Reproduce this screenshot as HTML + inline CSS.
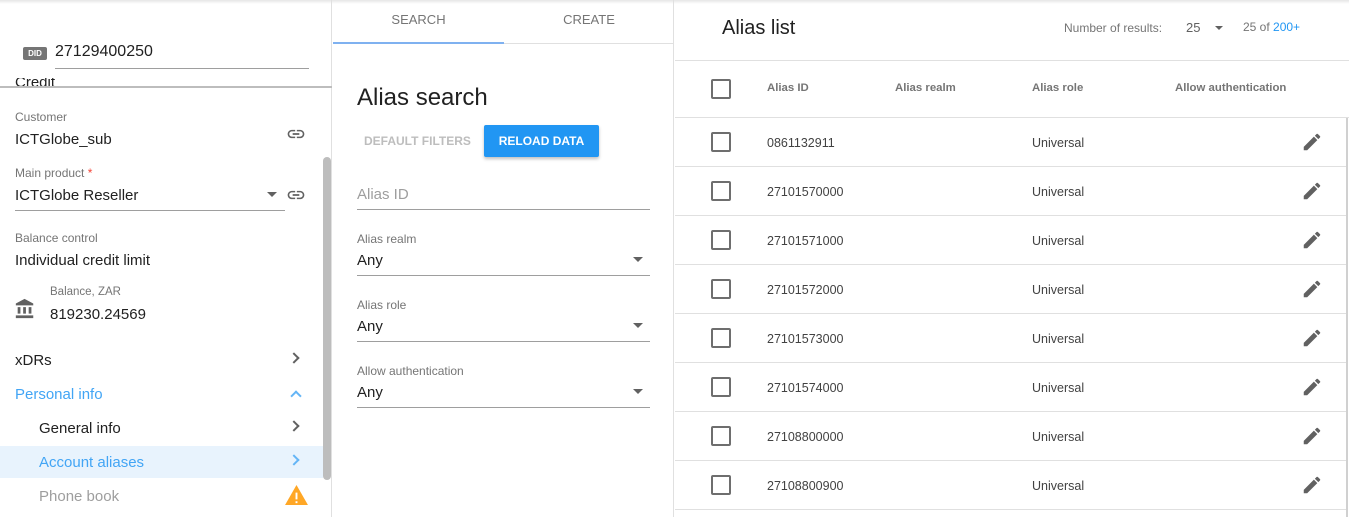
<!DOCTYPE html>
<html><head><style>
*{box-sizing:border-box;margin:0;padding:0}
body{width:1349px;height:517px;overflow:hidden;background:#fff;font-family:"Liberation Sans",Arial,sans-serif;position:relative;color:#212121}
.a{position:absolute;white-space:nowrap}
.lbl{font-size:12px;color:#757575}
.val{font-size:15px;color:#212121}
.hr{position:absolute;height:1px;background:#e0e0e0}
.cb{position:absolute;width:20px;height:20px;border:2px solid #6e6e6e;border-radius:2px;left:711px}
.cell{position:absolute;font-size:12.5px;color:#424242}
.th{position:absolute;font-size:11.4px;color:#757575;font-weight:bold;top:82px}
</style></head><body>
<div class="a" style="left:0;top:0;width:1349px;height:4px;background:linear-gradient(#e6e6e6,#fff)"></div>

<div class="a" style="left:0;top:0;width:332px;height:517px;border-right:1px solid #e0e0e0"></div>
<div class="a" style="left:15px;top:78px;font-size:15px;color:#212121;height:9px;overflow:hidden;line-height:10px">Credit</div>
<div class="a" style="left:0;top:86px;width:332px;height:2px;background:#bdbdbd"></div>
<div class="a" style="left:23px;top:47px;width:24px;height:13px;background:#757575;border-radius:2px;color:#fff;font-size:8px;font-weight:bold;text-align:center;line-height:13px">DID</div>
<div class="a" style="left:55px;top:43px;font-size:16px;color:#212121">27129400250</div>
<div class="a" style="left:55px;top:68px;width:254px;height:1px;background:#9e9e9e"></div>

<div class="a lbl" style="left:15px;top:110px">Customer</div>
<div class="a val" style="left:15px;top:131px">ICTGlobe_sub</div>
<svg class="a" style="left:286px;top:127px" width="20" height="14" viewBox="0 4 24 16"><path fill="#616161" d="M3.9 12c0-1.710 1.39-3.1 3.1-3.1h4V7H7c-2.76 0-5 2.24-5 5s2.24 5 5 5h4v-1.9H7c-1.71 0-3.1-1.39-3.1-3.1zM8 13h8v-2H8v2zm9-6h-4v1.9h4c1.71 0 3.1 1.39 3.1 3.1s-1.39 3.1-3.1 3.1h-4V17h4c2.76 0 5-2.240 5-5s-2.24-5-5-5z"/></svg>

<div class="a lbl" style="left:15px;top:166px">Main product <span style="color:#f44336">*</span></div>
<div class="a val" style="left:15px;top:187px">ICTGlobe Reseller</div>
<div class="a" style="left:267px;top:192px;border:5px solid transparent;border-top-color:#616161;border-bottom:0"></div>
<div class="a" style="left:15px;top:210px;width:270px;height:1px;background:#9e9e9e"></div>
<svg class="a" style="left:286px;top:188px" width="20" height="14" viewBox="0 4 24 16"><path fill="#616161" d="M3.9 12c0-1.71 1.39-3.1 3.1-3.1h4V7H7c-2.76 0-5 2.24-5 5s2.24 5 5 5h4v-1.9H7c-1.71 0-3.1-1.39-3.1-3.1zM8 13h8v-2H8v2zm9-6h-4v1.9h4c1.71 0 3.1 1.39 3.1 3.1s-1.39 3.1-3.1 3.1h-4V17h4c2.76 0 5-2.24 5-5s-2.24-5-5-5z"/></svg>

<div class="a lbl" style="left:15px;top:231px">Balance control</div>
<div class="a val" style="left:15px;top:252px">Individual credit limit</div>
<svg class="a" style="left:14px;top:298px" width="22" height="22" viewBox="0 0 24 24"><path fill="#616161" d="M4 10v7h3v-7H4zm6 0v7h3v-7h-3zM2 22h19v-3H2v3zm14-12v7h3v-7h-3zm-4.5-9L2 6v2h19V6l-9.5-5z"/></svg>
<div class="a" style="left:50px;top:286px;font-size:11.5px;color:#757575">Balance, ZAR</div>
<div class="a val" style="left:50px;top:306px">819230.24569</div>

<div class="a val" style="left:15px;top:352px">xDRs</div>
<div class="a" style="left:290px;top:354px;width:8px;height:8px;border-right:2px solid #616161;border-top:2px solid #616161;transform:rotate(45deg)"></div>
<div class="a val" style="left:15px;top:386px;color:#42a5f5">Personal info</div>
<div class="a" style="left:292px;top:392px;width:8px;height:8px;border-left:2px solid #64b5f6;border-top:2px solid #64b5f6;transform:rotate(45deg)"></div>
<div class="a val" style="left:39px;top:420px">General info</div>
<div class="a" style="left:290px;top:422px;width:8px;height:8px;border-right:2px solid #616161;border-top:2px solid #616161;transform:rotate(45deg)"></div>
<div class="a" style="left:0;top:446px;width:323px;height:32px;background:#e8f3fd"></div>
<div class="a val" style="left:39px;top:454px;color:#42a5f5">Account aliases</div>
<div class="a" style="left:290px;top:456px;width:8px;height:8px;border-right:2px solid #64b5f6;border-top:2px solid #64b5f6;transform:rotate(45deg)"></div>
<div class="a val" style="left:39px;top:488px;color:#9e9e9e">Phone book</div>
<svg class="a" style="left:285px;top:485px" width="23" height="21" viewBox="0 0 24 22"><path fill="#ffa726" d="M0 21h24L12 0z"/><path fill="#fff" d="M11 8h2v7h-2zM11 17h2v2h-2z"/></svg>
<div class="a" style="left:323px;top:157px;width:8px;height:323px;background:#bdbdbd;border-radius:4px"></div>

<div class="a" style="left:333px;top:0;width:341px;height:517px;border-right:1px solid #e0e0e0"></div>
<div class="a" style="left:333px;top:12px;width:171px;text-align:center;font-size:13px;color:#757575">SEARCH</div>
<div class="a" style="left:504px;top:12px;width:170px;text-align:center;font-size:13px;color:#757575">CREATE</div>
<div class="a" style="left:333px;top:43px;width:341px;height:1px;background:#e0e0e0"></div>
<div class="a" style="left:333px;top:42px;width:171px;height:2px;background:#7fb1f0"></div>
<div class="a" style="left:357px;top:84px;font-size:24px;color:#212121">Alias search</div>
<div class="a" style="left:364px;top:134px;font-size:12px;color:#bdbdbd;font-weight:bold">DEFAULT FILTERS</div>
<div class="a" style="left:484px;top:125px;width:115px;height:32px;background:#2196f3;border-radius:2px;box-shadow:0 2px 3px rgba(0,0,0,.25);color:#fff;font-size:12px;font-weight:bold;text-align:center;line-height:32px">RELOAD DATA</div>
<div class="a" style="left:357px;top:186px;font-size:15px;color:#9e9e9e">Alias ID</div>
<div class="a" style="left:357px;top:209px;width:293px;height:1px;background:#9e9e9e"></div>
<div class="a lbl" style="left:357px;top:232px">Alias realm</div>
<div class="a val" style="left:357px;top:252px">Any</div>
<div class="a" style="left:633px;top:257px;border:5px solid transparent;border-top-color:#616161;border-bottom:0"></div>
<div class="a" style="left:357px;top:275px;width:293px;height:1px;background:#9e9e9e"></div>
<div class="a lbl" style="left:357px;top:298px">Alias role</div>
<div class="a val" style="left:357px;top:318px">Any</div>
<div class="a" style="left:633px;top:323px;border:5px solid transparent;border-top-color:#616161;border-bottom:0"></div>
<div class="a" style="left:357px;top:341px;width:293px;height:1px;background:#9e9e9e"></div>
<div class="a lbl" style="left:357px;top:364px">Allow authentication</div>
<div class="a val" style="left:357px;top:384px">Any</div>
<div class="a" style="left:633px;top:389px;border:5px solid transparent;border-top-color:#616161;border-bottom:0"></div>
<div class="a" style="left:357px;top:407px;width:293px;height:1px;background:#9e9e9e"></div>

<div class="a" style="left:722px;top:17px;font-size:20px;color:#212121">Alias list</div>
<div class="a" style="left:1064px;top:21px;font-size:12px;color:#757575">Number of results:</div>
<div class="a" style="left:1186px;top:20px;font-size:13px;color:#616161">25</div>
<div class="a" style="left:1215px;top:26px;border:4px solid transparent;border-top-color:#616161;border-bottom:0"></div>
<div class="a" style="left:1243px;top:20px;font-size:12px;color:#757575">25 of <span style="color:#2196f3">200+</span></div>
<div class="hr" style="left:675px;top:60px;width:674px"></div>
<div class="cb" style="top:79px"></div>
<div class="th" style="left:767px">Alias ID</div>
<div class="th" style="left:895px">Alias realm</div>
<div class="th" style="left:1032px">Alias role</div>
<div class="th" style="left:1175px">Allow authentication</div>
<div class="hr" style="left:675px;top:117px;width:674px"></div>
<div class="a" style="left:1346px;top:118px;width:2px;height:399px;background:#d0d0d0"></div>

<div class="cb" style="top:132px"></div><div class="cell" style="left:767px;top:136px">0861132911</div><div class="cell" style="left:1032px;top:136px">Universal</div><div class="hr" style="left:675px;top:166px;width:671px"></div>
<div class="cb" style="top:181px"></div><div class="cell" style="left:767px;top:185px">27101570000</div><div class="cell" style="left:1032px;top:185px">Universal</div><div class="hr" style="left:675px;top:215px;width:671px"></div>
<div class="cb" style="top:230px"></div><div class="cell" style="left:767px;top:234px">27101571000</div><div class="cell" style="left:1032px;top:234px">Universal</div><div class="hr" style="left:675px;top:264px;width:671px"></div>
<div class="cb" style="top:279px"></div><div class="cell" style="left:767px;top:283px">27101572000</div><div class="cell" style="left:1032px;top:283px">Universal</div><div class="hr" style="left:675px;top:313px;width:671px"></div>
<div class="cb" style="top:328px"></div><div class="cell" style="left:767px;top:332px">27101573000</div><div class="cell" style="left:1032px;top:332px">Universal</div><div class="hr" style="left:675px;top:362px;width:671px"></div>
<div class="cb" style="top:377px"></div><div class="cell" style="left:767px;top:381px">27101574000</div><div class="cell" style="left:1032px;top:381px">Universal</div><div class="hr" style="left:675px;top:411px;width:671px"></div>
<div class="cb" style="top:426px"></div><div class="cell" style="left:767px;top:430px">27108800000</div><div class="cell" style="left:1032px;top:430px">Universal</div><div class="hr" style="left:675px;top:460px;width:671px"></div>
<div class="cb" style="top:475px"></div><div class="cell" style="left:767px;top:479px">27108800900</div><div class="cell" style="left:1032px;top:479px">Universal</div><div class="hr" style="left:675px;top:509px;width:671px"></div>

<svg class="a" style="left:1301px;top:131px" width="22" height="22" viewBox="0 0 24 24"><path fill="#616161" d="M3 17.25V21h3.75L17.81 9.94l-3.75-3.75L3 17.25zM20.71 7.04a1 1 0 000-1.41l-2.34-2.34a1 1 0 00-1.41 0l-1.83 1.830 3.75 3.75 1.83-1.83z"/></svg>
<svg class="a" style="left:1301px;top:180px" width="22" height="22" viewBox="0 0 24 24"><path fill="#616161" d="M3 17.25V21h3.75L17.81 9.94l-3.75-3.75L3 17.25zM20.71 7.04a1 1 0 000-1.41l-2.34-2.34a1 1 0 00-1.41 0l-1.83 1.83 3.75 3.75 1.83-1.83z"/></svg>
<svg class="a" style="left:1301px;top:229px" width="22" height="22" viewBox="0 0 24 24"><path fill="#616161" d="M3 17.25V21h3.75L17.81 9.94l-3.75-3.75L3 17.25zM20.71 7.04a1 1 0 000-1.41l-2.34-2.34a1 1 0 00-1.41 0l-1.83 1.83 3.75 3.75 1.83-1.83z"/></svg>
<svg class="a" style="left:1301px;top:278px" width="22" height="22" viewBox="0 0 24 24"><path fill="#616161" d="M3 17.25V21h3.75L17.81 9.94l-3.75-3.75L3 17.25zM20.71 7.04a1 1 0 000-1.41l-2.34-2.34a1 1 0 00-1.41 0l-1.83 1.83 3.75 3.75 1.83-1.83z"/></svg>
<svg class="a" style="left:1301px;top:327px" width="22" height="22" viewBox="0 0 24 24"><path fill="#616161" d="M3 17.25V21h3.75L17.81 9.94l-3.75-3.75L3 17.25zM20.71 7.04a1 1 0 000-1.41l-2.34-2.34a1 1 0 00-1.41 0l-1.83 1.83 3.75 3.75 1.83-1.83z"/></svg>
<svg class="a" style="left:1301px;top:376px" width="22" height="22" viewBox="0 0 24 24"><path fill="#616161" d="M3 17.25V21h3.75L17.81 9.94l-3.75-3.75L3 17.25zM20.71 7.04a1 1 0 000-1.41l-2.34-2.34a1 1 0 00-1.41 0l-1.83 1.83 3.75 3.75 1.83-1.83z"/></svg>
<svg class="a" style="left:1301px;top:425px" width="22" height="22" viewBox="0 0 24 24"><path fill="#616161" d="M3 17.25V21h3.75L17.81 9.94l-3.75-3.75L3 17.25zM20.71 7.04a1 1 0 000-1.41l-2.34-2.34a1 1 0 00-1.41 0l-1.83 1.83 3.75 3.75 1.83-1.83z"/></svg>
<svg class="a" style="left:1301px;top:474px" width="22" height="22" viewBox="0 0 24 24"><path fill="#616161" d="M3 17.25V21h3.75L17.81 9.94l-3.75-3.75L3 17.25zM20.71 7.04a1 1 0 000-1.41l-2.34-2.34a1 1 0 00-1.41 0l-1.83 1.83 3.75 3.75 1.83-1.83z"/></svg>
</body></html>
